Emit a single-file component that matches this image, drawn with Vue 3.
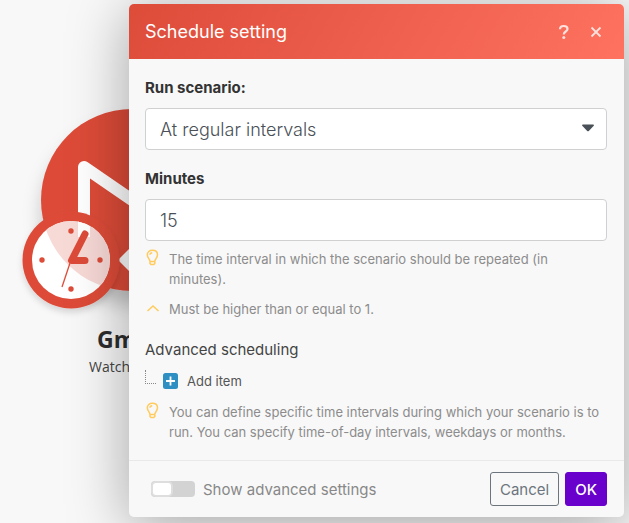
<template>
  <div class="scenario">
    <div class="module">
      <svg class="module-icon" viewBox="0 0 224 224" aria-hidden="true">
        <defs>
          <filter id="module-shadow" x="-30%" y="-30%" width="160%" height="170%">
            <feDropShadow dx="0" dy="14" stdDeviation="9" flood-color="#000" flood-opacity="0.2" />
          </filter>
          <filter id="clock-shadow" x="-30%" y="-30%" width="160%" height="160%">
            <feDropShadow dx="0" dy="4" stdDeviation="3" flood-color="#000" flood-opacity="0.14" />
          </filter>
          <clipPath id="clock-face"><circle cx="51" cy="159" r="39" /></clipPath>
        </defs>
        <circle cx="112" cy="99" r="91" fill="#dd4b39" filter="url(#module-shadow)" />
        <path
          d="M64 148V66L112 99L160 66V158"
          fill="none"
          stroke="#fff"
          stroke-width="12"
          stroke-linejoin="round"
        />
        <path d="M98 159L112 145V173Z" fill="#fff" />
        <circle cx="51" cy="159" r="48.500" fill="#dd4b39" filter="url(#clock-shadow)" />
        <circle cx="51" cy="159" r="39" fill="#fff" />
        <g clip-path="url(#clock-face)">
          <circle cx="112" cy="99" r="91" fill="#f7d9d6" />
          <path d="M58 110H70V136H58Z" fill="#fff" />
        </g>
        <g fill="#dd4b39">
          <circle cx="51" cy="130" r="2.700" />
          <circle cx="80" cy="159" r="2.700" />
          <circle cx="51" cy="188" r="2.700" />
          <circle cx="22" cy="159" r="2.700" />
        </g>
        <path
          d="M65 133L51.500 159.500H65"
          fill="none"
          stroke="#dd4b39"
          stroke-width="7"
          stroke-linecap="round"
          stroke-linejoin="round"
        />
        <path d="M51 159L42 186" stroke="#dd4b39" stroke-width="1.300" />
      </svg>
      <div class="module-name">Gm</div>
      <div class="module-action">Watch</div>
    </div>

    <form class="dialog" @submit.prevent>
      <header class="dialog-header">
        <h1>Schedule setting</h1>
        <button type="button" class="header-button" aria-label="Help">
          <svg width="12" height="16" viewBox="0 0 12 16">
            <path
              d="M2 5.200C2 3.100 3.600 2 5.800 2C8 2 9.500 3.200 9.500 5C9.500 7.700 5.800 7.300 5.800 10.400"
              fill="none"
              stroke="currentColor"
              stroke-width="2.200"
            />
            <circle cx="5.800" cy="13.400" r="1.500" fill="currentColor" />
          </svg>
        </button>
        <button type="button" class="header-button" aria-label="Close">
          <svg width="12" height="12" viewBox="0 0 12 12">
            <path d="M1.500 1.500L10.500 10.500M10.500 1.500L1.500 10.500" stroke="currentColor" stroke-width="1.800" />
          </svg>
        </button>
      </header>

      <div class="dialog-body">
        <div class="field">
          <label for="run">Run scenario:</label>
          <div class="select">
            <select id="run" v-model="run">
              <option value="interval">At regular intervals</option>
            </select>
            <svg class="caret" width="12" height="8" viewBox="0 0 12 8" aria-hidden="true">
              <path d="M0.500 0.500H11.500L12 1.500L6.800 7Q6 7.600 5.200 7L0 1.500Z" fill="#495057" />
            </svg>
          </div>
        </div>

        <div class="field">
          <label for="minutes">Minutes</label>
          <input id="minutes" v-model="minutes" class="control" type="text" inputmode="numeric" />
        </div>

        <div v-for="hint in minuteHints" :key="hint.text" class="hint">
          <svg class="hint-icon" viewBox="0 0 14 18" aria-hidden="true">
            <path :d="icons[hint.icon]" />
          </svg>
          <p>{{ hint.text }}</p>
        </div>

        <h2>Advanced scheduling</h2>
        <div class="tree">
          <span class="branch"></span>
          <button type="button" class="add-item">
            <svg width="15" height="16" viewBox="0 0 15 16" aria-hidden="true">
              <rect width="15" height="16" rx="2.500" fill="#2e8fc2" />
              <path d="M7.500 3.500V12.500M3 8H12" stroke="#fff" stroke-width="1.800" />
            </svg>
            Add item
          </button>
        </div>
        <div class="hint">
          <svg class="hint-icon" viewBox="0 0 14 18" aria-hidden="true">
            <path :d="icons.bulb" />
          </svg>
          <p>
            You can define specific time intervals during which your scenario is to run. You can specify
            time-of-day intervals, weekdays or months.
          </p>
        </div>
      </div>

      <footer class="dialog-footer">
        <label class="switch">
          <input v-model="advanced" type="checkbox" />
          Show advanced settings
        </label>
        <button type="button" class="btn btn-cancel">Cancel</button>
        <button type="submit" class="btn btn-ok">OK</button>
      </footer>
    </form>
  </div>
</template>

<script setup>
import { ref } from 'vue'

const run = ref('interval')
const minutes = ref('15')
const advanced = ref(false)

const icons = {
  bulb: 'M5 12.500C5 10 2.300 9 2.300 5.800C2.300 2.900 4.500 1.300 7.400 1.300C10.300 1.300 12.500 2.900 12.500 5.800C12.500 9 9.800 10 9.800 12.500ZM5 12.500V14.500L6 15.500H8.800L9.800 14.500V12.500M4.900 5.800C4.900 4.500 5.900 3.800 7.200 3.800',
  up: 'M2.500 12L8 7L13.500 12'
}

const minuteHints = [
  {
    icon: 'bulb',
    text: 'The time interval in which the scenario should be repeated (in minutes).'
  },
  { icon: 'up', text: 'Must be higher than or equal to 1.' }
]
</script>

<style>
body {
  margin: 0;
  background: #f8f8f8;
}
</style>

<style scoped>
* {
  box-sizing: border-box;
}

.scenario {
  position: relative;
  min-height: 100vh;
  padding: 4px 5px 6px 129px;
  overflow: hidden;
  font-family: Inter, 'Liberation Sans', sans-serif;
}

.module {
  position: absolute;
  left: 20px;
  top: 101px;
  color: #2d2d2d;
  font-family: 'Open Sans', 'Noto Sans', sans-serif;
}

.module-icon {
  display: block;
  width: 224px;
  height: 224px;
  overflow: visible;
}

.module-name {
  padding-left: 77px;
  font-size: 23px;
  font-weight: 700;
  line-height: 28px;
}

.module-action {
  padding-left: 69px;
  color: #444;
  font-size: 14px;
  line-height: 28px;
}

.dialog {
  position: relative;
  border-radius: 5px;
  background: #f8f8f8;
  box-shadow: 0 8px 60px rgba(0, 0, 0, 0.35);
}

.dialog-header {
  display: flex;
  align-items: center;
  gap: 10px;
  height: 55px;
  padding: 0 17px 0 16px;
  border-radius: 5px 5px 0 0;
  background: linear-gradient(120deg, #dd4b39, #ff7260);
  color: #fff;
}

h1 {
  flex: 1;
  margin: 0;
  font-size: 18px;
  font-weight: 400;
}

.header-button {
  display: grid;
  place-items: center;
  width: 22px;
  height: 24px;
  padding: 0;
  border: 0;
  background: none;
  color: #ffe0dc;
  cursor: pointer;
}

.dialog-body {
  padding: 16px 17px 18px 16px;
}

.field {
  margin-bottom: 16px;
}

.field label {
  display: block;
  margin-bottom: 8px;
  color: #333;
  font-size: 15px;
  font-weight: 700;
  line-height: 25px;
}

.select {
  position: relative;
}

select,
.control {
  display: block;
  width: 100%;
  height: 42px;
  padding: 0 14px;
  appearance: none;
  border: 1px solid #ced0d2;
  border-radius: 4px;
  background: #fff;
  color: #495057;
  font-family: inherit;
  font-size: 18px;
  font-weight: 300;
}

.caret {
  position: absolute;
  right: 13px;
  top: 16px;
  pointer-events: none;
}

.hint {
  display: flex;
  gap: 10px;
  margin-top: 10px;
}

.field + .hint {
  margin-top: -8px;
}

.hint-icon {
  flex: none;
  width: 14px;
  height: 18px;
  overflow: visible;
  fill: none;
  stroke: #ffcb5c;
  stroke-width: 1.5;
}

.hint p {
  margin: 0;
  color: #8c8c8c;
  font-size: 13px;
  line-height: 20px;
}

h2 {
  margin: 18px 0 8px;
  color: #444;
  font-size: 15px;
  font-weight: 400;
  line-height: 25px;
}

.tree {
  display: flex;
  gap: 7px;
  height: 22px;
}

.branch {
  width: 11px;
  height: 14px;
  border-bottom: 1px dotted #888;
  border-left: 1px dotted #888;
}

.add-item {
  display: flex;
  align-items: center;
  gap: 9px;
  padding: 0;
  border: 0;
  background: none;
  color: #555;
  font-family: inherit;
  font-size: 13px;
  cursor: pointer;
}

.dialog-footer {
  display: flex;
  align-items: center;
  gap: 6px;
  padding: 11px 17px 11px 22px;
  border-top: 1px solid #e9e9e9;
}

.switch {
  display: flex;
  flex: 1;
  align-items: center;
  gap: 8px;
  color: #888;
  font-size: 15px;
}

.switch input {
  width: 44px;
  height: 16px;
  margin: 0;
  padding: 2px;
  appearance: none;
  border-radius: 4px;
  background: #d3d3d3;
}

.switch input::before {
  content: '';
  display: block;
  width: 18px;
  height: 12px;
  border-radius: 3px;
  background: #fff;
  box-shadow: 0 0 0 2px #dedede;
}

.switch input:checked::before {
  margin-left: auto;
}

.btn {
  height: 34px;
  padding: 0 9px;
  border: 1px solid #6c757d;
  border-radius: 3px;
  background: transparent;
  color: #6c757d;
  font-family: inherit;
  font-size: 15px;
  cursor: pointer;
}

.btn-ok {
  border-color: #6a00cc;
  background: #6a00cc;
  color: #fff;
  font-weight: 500;
}
</style>
